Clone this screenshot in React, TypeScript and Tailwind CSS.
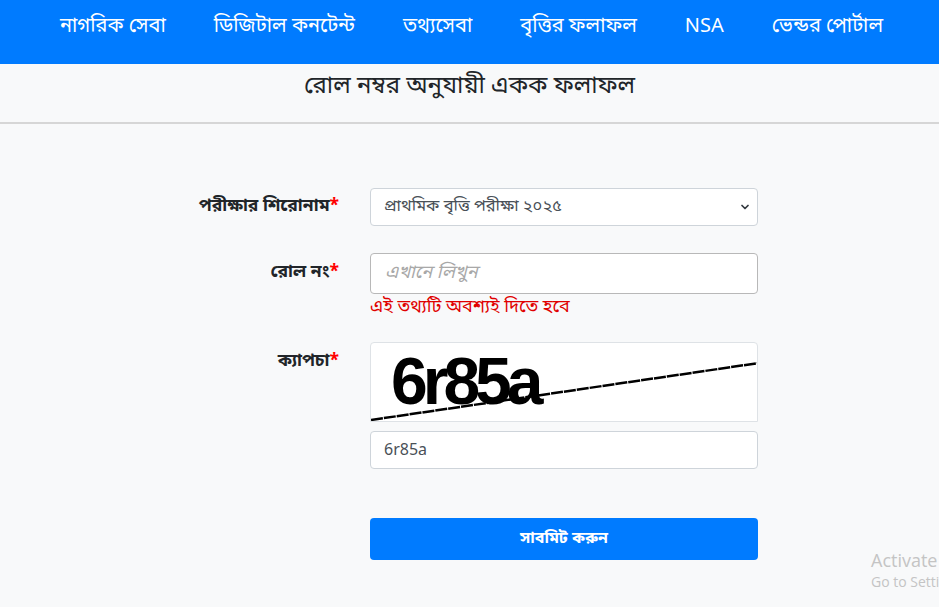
import { ChevronDown } from "lucide-react";

const font = { fontFamily: '"Noto Sans Bengali", "Noto Sans", "Liberation Sans", sans-serif' };

const nav = [
  "নাগরিক সেবা",
  "ডিজিটাল কনটেন্ট",
  "তথ্যসেবা",
  "বৃত্তির ফলাফল",
  "NSA",
  "ভেন্ডর পোর্টাল",
];

function Label({ text }: { text: string }) {
  return (
    <div className="w-[158px] shrink-0 whitespace-nowrap text-right text-[17.5px] font-bold text-[#212529]">
      {text}
      <span className="text-[#ff0000]">*</span>
    </div>
  );
}

function Captcha() {
  return (
    <div className="relative h-[80px] overflow-hidden rounded-t-[4px] border border-[#dee2e6] bg-white">
      <svg className="absolute inset-0" width="388" height="80" viewBox="0 0 388 80">
        <line x1="0" y1="77" x2="388" y2="20" stroke="#000" strokeWidth="2.5" strokeDasharray="12 1" />
      </svg>
      <div
        className="absolute left-[20px] top-[-2px] text-[66px] font-bold leading-[80px] tracking-[-5px] text-black"
        style={{ fontFamily: '"Liberation Sans", Arial, sans-serif' }}
      >
        6r85a
      </div>
    </div>
  );
}

export default function App() {
  return (
    <div className="min-h-[607px] overflow-hidden bg-[#f8f9fa]" style={font}>
      <nav className="flex h-[64px] items-start justify-center bg-[#007bff] pl-[4px] pt-[12px]">
        {nav.map((n) => (
          <a key={n} className="px-[24px] text-[20px] text-white">
            {n}
          </a>
        ))}
      </nav>

      <h4 className="pt-[5px] text-center text-[24px] text-[#212529]">
        রোল নম্বর অনুযায়ী একক ফলাফল
      </h4>
      <div className="mt-[17px] h-[2px] bg-[#d6d6d6]" />

      <div className="relative">
        <form className="mx-auto flex w-[577px] flex-col pt-[64px]">
          <div className="flex items-center gap-[31px]">
            <Label text="পরীক্ষার শিরোনাম" />
            <div className="relative flex h-[38px] flex-1 items-center rounded-[4px] border border-[#ced4da] bg-white pl-[13px] text-[16.5px] text-[#495057]">
              প্রাথমিক বৃত্তি পরীক্ষা ২০২৫
              <ChevronDown className="absolute right-[6px] top-[12px] h-[12px] w-[12px] text-[#343a40]" strokeWidth={3.5} />
            </div>
          </div>

          <div className="mt-[27px] flex gap-[31px]">
            <div className="flex h-[41px] items-center">
              <Label text="রোল নং" />
            </div>
            <div className="flex flex-1 flex-col">
              <div className="flex h-[41px] items-center rounded-[4px] border border-[#b8b8b8] bg-white pl-[14px] text-[18px] italic text-[#a8a8a8]">
                এখানে লিখুন
              </div>
              <div className="text-[18px] leading-[26px] text-[#e00000]">এই তথ্যটি অবশ্যই দিতে হবে</div>
            </div>
          </div>

          <div className="mt-[22px] flex gap-[31px]">
            <div className="flex h-[40px] items-center">
              <Label text="ক্যাপচা" />
            </div>
            <div className="flex flex-1 flex-col">
              <Captcha />
              <div className="mt-[9px] flex h-[38px] items-center rounded-[4px] border border-[#ced4da] bg-white pl-[13px] text-[16px] text-[#495057]">
                <span className="pt-[2px]">6r85a</span>
              </div>
            </div>
          </div>

          <div className="mt-[49px] flex gap-[31px]">
            <div className="w-[158px] shrink-0" />
            <button
              type="button"
              className="flex h-[42px] flex-1 items-center justify-center rounded-[4px] bg-[#007bff] text-[16px] font-bold text-white"
            >
              সাবমিট করুন
            </button>
          </div>
        </form>

        <div
          className="absolute left-[871px] top-[424px] whitespace-nowrap text-[18px] leading-[24px] text-[#c4c4c4]"
          style={{ fontFamily: '"Open Sans", sans-serif' }}
        >
          Activate
          <div className="text-[14px] leading-[20px]">Go to Settings</div>
        </div>
      </div>
    </div>
  );
}
